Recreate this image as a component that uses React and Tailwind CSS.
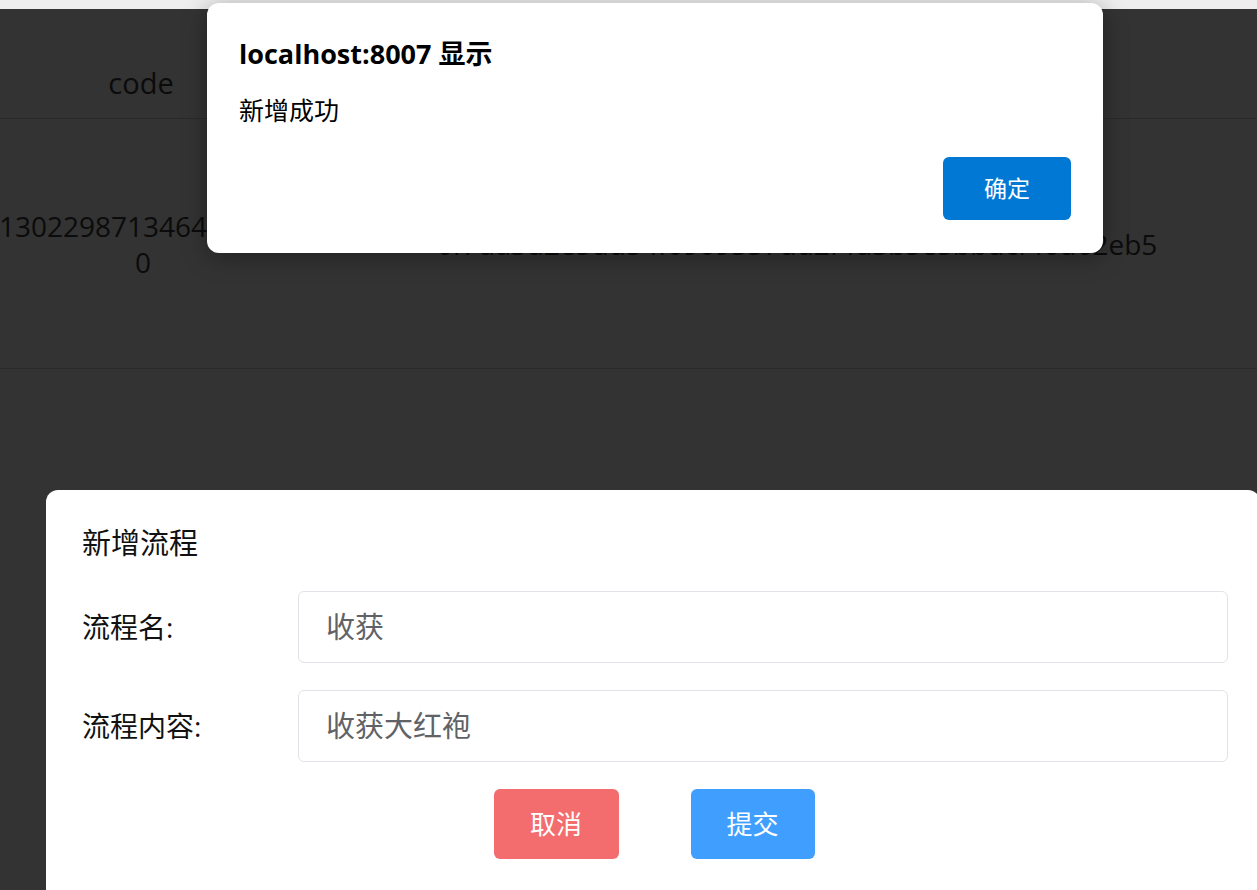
export default function App() {
  const font = { fontFamily: '"Open Sans","Noto Sans CJK SC",sans-serif' };
  return (
    <div
      className="relative w-[1257px] h-[890px] overflow-hidden bg-[#333333] text-[#0b0b0b]"
      style={font}
    >
      <div className="h-[9px] bg-[#eeeeee]" />
      <div className="grid grid-cols-[286px_1048px] w-[1334px]">
        <div className="h-[110px] border-b border-[#2a2a2a] flex items-center justify-center pt-[38px] pr-[4px] text-[29px]">
          code
        </div>
        <div className="h-[110px] border-b border-[#2a2a2a]" />
        <div className="h-[250px] border-b border-[#2a2a2a] flex flex-col items-center justify-center text-[28px] leading-[36px]">
          <span className="whitespace-nowrap">130229871346405163</span>
          <span>0</span>
        </div>
        <div className="h-[250px] border-b border-[#2a2a2a] flex items-center justify-center pr-[26px] text-[28px] leading-[36px]">
          <span className="whitespace-nowrap">6f7da3d2e5dd54f0909357dd2f4d3b5e5bbdcf46d62eb5</span>
        </div>
      </div>

      {/* browser alert */}
      <div className="absolute left-[207px] top-[3px] w-[896px] h-[250px] bg-white rounded-[12px] shadow-[0_4px_24px_rgba(0,0,0,0.35)] px-[32px] pt-[34px]">
        <div className="text-[27px] font-bold leading-[34px] text-black">localhost:8007 显示</div>
        <div className="mt-[22px] text-[25px] leading-[34px] text-black">新增成功</div>
        <div className="mt-[30px] flex justify-end">
          <button className="w-[128px] h-[63px] rounded-[6px] bg-[#0078d4] text-white text-[23px]">
            确定
          </button>
        </div>
      </div>

      {/* form dialog */}
      <div className="absolute left-[46px] top-[490px] w-[1214px] h-[420px] bg-white rounded-[12px] pl-[36px] pr-[32px] pt-[33px]">
        <div className="text-[29px] leading-[40px] text-[#111]">新增流程</div>
        <div className="mt-[28px] flex items-center">
          <label className="w-[216px] text-[28px] text-[#111]">流程名:</label>
          <div className="flex-1 h-[72px] border border-[#e1e3e8] rounded-[6px] flex items-center px-[27px] text-[29px] text-[#606266]">
            收获
          </div>
        </div>
        <div className="mt-[27px] flex items-center">
          <label className="w-[216px] text-[28px] text-[#111]">流程内容:</label>
          <div className="flex-1 h-[72px] border border-[#e1e3e8] rounded-[6px] flex items-center px-[27px] text-[29px] text-[#606266]">
            收获大红袍
          </div>
        </div>
        <div className="mt-[27px] flex justify-center gap-[72px] pr-[2px]">
          <button className="w-[125px] h-[70px] rounded-[6px] bg-[#f36d6f] text-white text-[26px]">
            取消
          </button>
          <button className="w-[124px] h-[70px] rounded-[6px] bg-[#409eff] text-white text-[26px]">
            提交
          </button>
        </div>
      </div>
    </div>
  );
}
